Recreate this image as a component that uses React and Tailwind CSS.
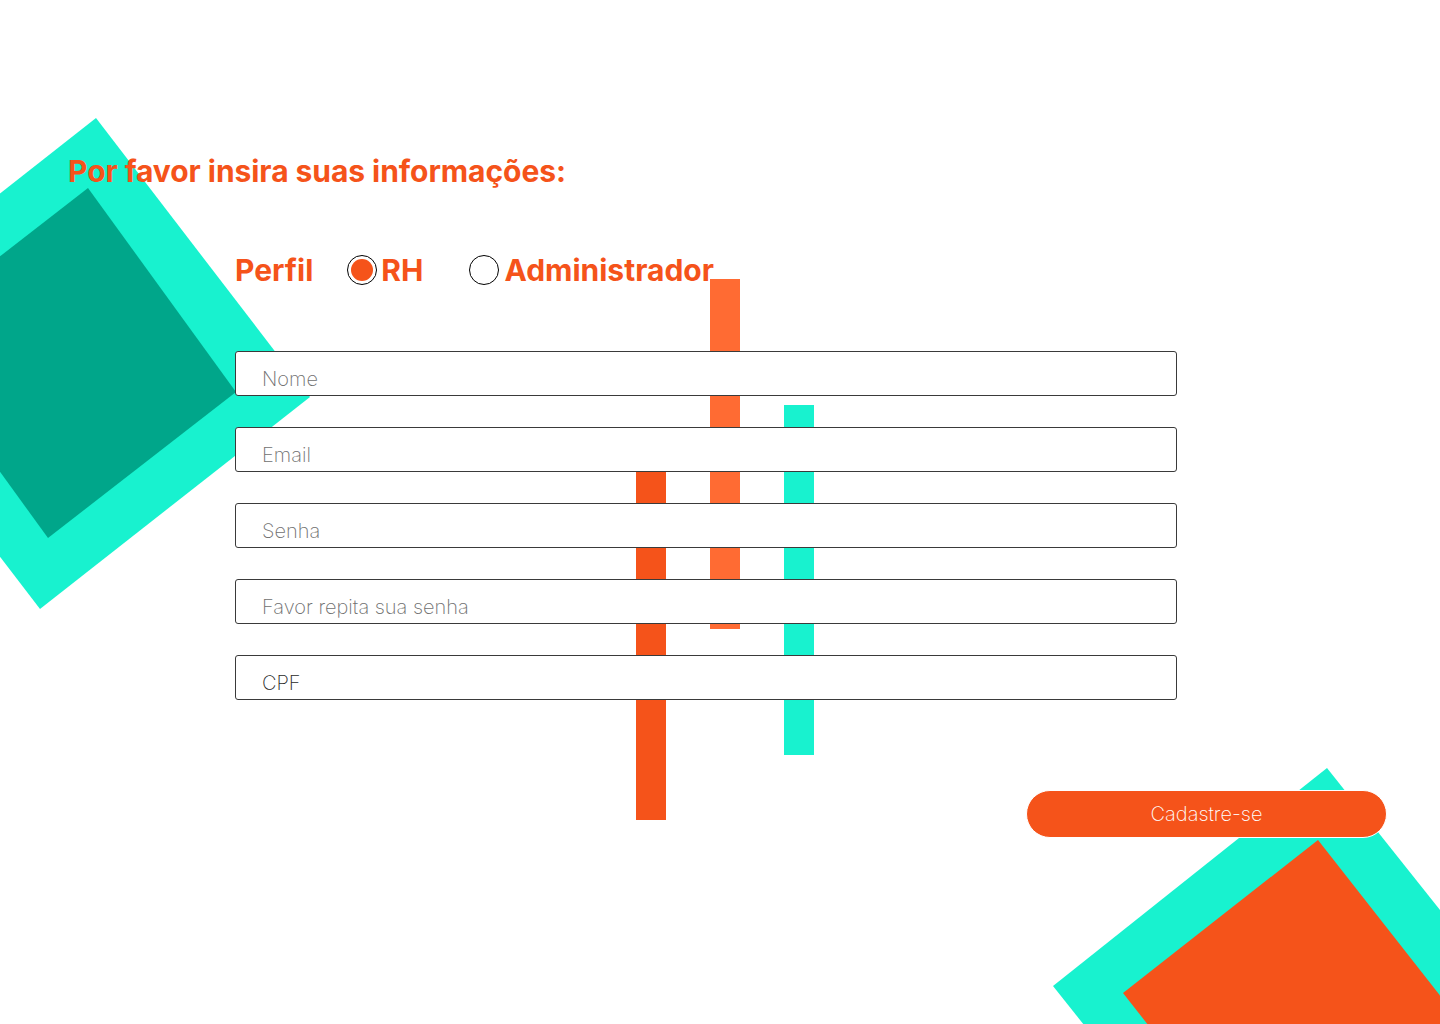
import React from "react"

const fields = [
  { name: "nome", placeholder: "Nome" },
  { name: "email", placeholder: "Email" },
  { name: "senha", placeholder: "Senha" },
  { name: "senha2", placeholder: "Favor repita sua senha" },
  { name: "cpf", placeholder: "CPF", dark: true },
]

function Radio({ checked }) {
  return (
    <span className="flex h-[30px] w-[30px] items-center justify-center rounded-full border border-black bg-white">
      {checked && <span className="h-[22px] w-[22px] rounded-full bg-[#F5531A]" />}
    </span>
  )
}

function Shapes() {
  return (
    <svg className="absolute inset-0" width="1440" height="1024" viewBox="0 0 1440 1024">
      <polygon points="96,118 310,397 40,609 -174,330" fill="#18F2CF" />
      <polygon points="88,188 236,392 48,538 -100,334" fill="#00A68A" />
      <polygon points="1327,768 1545,1042 1271,1260 1053,986" fill="#18F2CF" />
      <polygon points="1318,840 1471,1035 1276,1188 1123,993" fill="#F5531A" />
    </svg>
  )
}

export default function App() {
  return (
    <div className="relative h-[1024px] w-full overflow-hidden bg-white font-['Inter',sans-serif]">
      <Shapes />

      {/* decorative bars */}
      <div className="absolute left-[636px] top-[470px] h-[350px] w-[30px] bg-[#F5531A]" />
      <div className="absolute left-[710px] top-[279px] h-[350px] w-[30px] bg-[#FF6B33]" />
      <div className="absolute left-[784px] top-[405px] h-[350px] w-[30px] bg-[#18F2CF]" />

      <div className="relative flex flex-col pt-[154px]">
        <h1 className="pl-[68px] text-[30px] font-bold leading-[34px] tracking-[-0.05px] text-[#F5531A]">
          Por favor insira suas informações:
        </h1>

        <div className="mt-[64px] flex items-center pl-[235px] text-[30px] font-bold leading-[36px] text-[#F5531A]">
          <span>Perfil</span>
          <label className="ml-[34px] flex items-center gap-[4px]">
            <Radio checked />
            <span>RH</span>
          </label>
          <label className="ml-[46px] flex items-center gap-[5px]">
            <Radio />
            <span>Administrador</span>
          </label>
        </div>

        <form className="mt-[63px] ml-[235px] flex w-[942px] flex-col gap-[31px]">
          {fields.map((f) => (
            <input
              key={f.name}
              name={f.name}
              placeholder={f.placeholder}
              className={
                "h-[45px] w-full rounded-[3px] border border-[#3a3a3a] bg-white pl-[26px] pt-[11px] text-[20px] font-extralight outline-none " +
                (f.dark ? "placeholder:text-[#2a2a2a]" : "placeholder:text-[#6f6f6f]")
              }
            />
          ))}
        </form>

        <div className="mt-[90px] flex w-[1387px] justify-end">
          <button className="h-[48px] w-[361px] rounded-full border border-white bg-[#F5531A] text-[20px] font-extralight text-white">
            Cadastre-se
          </button>
        </div>
      </div>
    </div>
  )
}
